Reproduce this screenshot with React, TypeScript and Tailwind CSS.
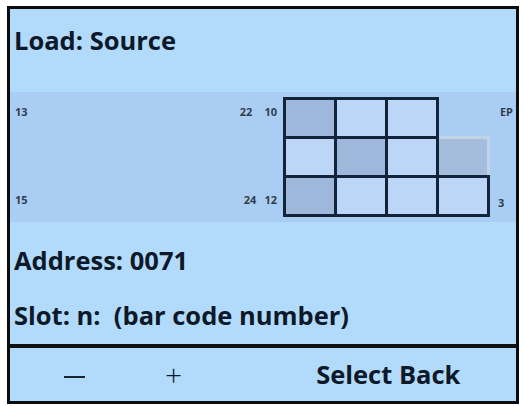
const font = { fontFamily: "'Open Sans', Lato, sans-serif" };

type Cell = { tone: "dark" | "light" | "ghost" | "none" };

const rows: Cell[][] = [
  [{ tone: "dark" }, { tone: "light" }, { tone: "light" }, { tone: "none" }],
  [{ tone: "light" }, { tone: "dark" }, { tone: "light" }, { tone: "ghost" }],
  [{ tone: "dark" }, { tone: "light" }, { tone: "light" }, { tone: "light" }],
];

function GridCell({ tone }: Cell) {
  if (tone === "none") return <div className="w-[54px] h-[42px] -ml-[3px]" />;
  if (tone === "ghost")
    return (
      <div className="w-[54px] h-[42px] -ml-[3px] border-[3px] border-[#c3d3e6] bg-[#a4bddc]" />
    );
  return (
    <div
      className={
        "relative z-10 w-[54px] h-[42px] -ml-[3px] border-[3px] border-[#13233a] " +
        (tone === "dark" ? "bg-[#9db8da]" : "bg-[#bcd6f7]")
      }
    />
  );
}

export default function App() {
  return (
    <div className="w-full h-screen bg-white pt-[6px] pl-[7px]" style={font}>
      <div className="w-[512px] h-[398px] border-[3px] border-[#0c0c0c] bg-[#b2dbfb] flex flex-col text-[#0d1828]">
        <div className="h-[83px] pt-[19px] pl-[4px] text-[25.5px] leading-none font-bold">
          Load: Source
        </div>

        <div className="h-[130px] bg-[#aacef3] flex text-[11px] font-bold text-[#333d4a] leading-none">
          <div className="flex-1 flex flex-col justify-between pt-[14px] pb-[17px] pl-[5px]">
            <span>13</span>
            <span>15</span>
          </div>
          <div className="flex flex-col justify-between pt-[14px] pb-[17px] pr-[6px] text-right">
            <span>
              22<span className="ml-[12px]">10</span>
            </span>
            <span>
              24<span className="ml-[8px]">12</span>
            </span>
          </div>
          <div className="flex flex-col pt-[5px] pl-[3px]">
            {rows.map((r, i) => (
              <div key={i} className={"flex " + (i > 0 ? "-mt-[3px]" : "")}>
                {r.map((c, j) => (
                  <GridCell key={j} tone={c.tone} />
                ))}
              </div>
            ))}
          </div>
          <div className="w-[26px] flex flex-col justify-between pt-[14px] pb-[14px]">
            <span className="text-right pr-[3px]">EP</span>
            <span className="pl-[8px]">3</span>
          </div>
        </div>

        <div className="pt-[26px] pl-[4px] text-[25.5px] leading-none font-bold">Address: 0071</div>
        <div className="pt-[29px] pl-[4px] text-[25.5px] leading-none font-bold whitespace-pre">
          Slot: n:  (bar code number)
        </div>

        <div className="mt-auto h-[57px] border-t-4 border-[#111] flex items-center text-[25.5px] font-bold">
          <span className="ml-[54px] mt-[4px] w-[21px] h-[2px] bg-[#1a2433]" />
          <span className="ml-[80px] font-light text-[30px] leading-none">+</span>
          <span className="ml-[134px] leading-none">Select Back</span>
        </div>
      </div>
    </div>
  );
}
